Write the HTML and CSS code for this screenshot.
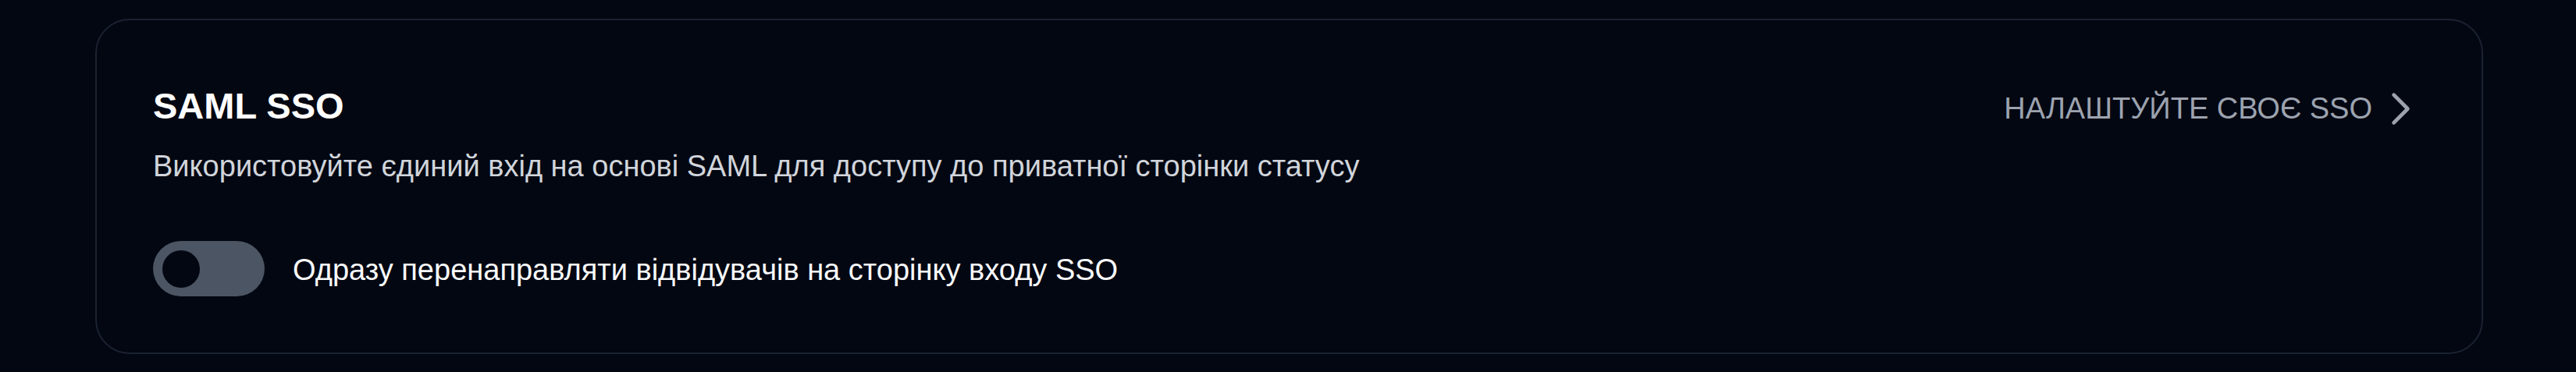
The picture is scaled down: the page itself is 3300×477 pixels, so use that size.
FILE: index.html
```html
<!DOCTYPE html>
<html lang="uk">
<head>
<meta charset="utf-8">
<title>SAML SSO</title>
<link rel="stylesheet" href="styles.css">
</head>
<body>
<main class="page">
  <section class="card">
    <div class="head">
      <div class="head-text">
        <h2 class="title">SAML SSO</h2>
        <p class="desc">Використовуйте єдиний вхід на основі SAML для доступу до приватної сторінки статусу</p>
      </div>
      <a class="link" href="#">
        <span class="link-text">НАЛАШТУЙТЕ СВОЄ SSO</span>
        <svg class="chevron" viewBox="0 0 24 24" fill="none" stroke="currentColor" stroke-width="2" stroke-linecap="round" stroke-linejoin="round" aria-hidden="true">
          <path d="m8.25 4.5 7.5 7.5-7.5 7.5"/>
        </svg>
      </a>
    </div>
    <label class="toggle-row">
      <span class="switch"><span class="knob"></span></span>
      <span class="toggle-label">Одразу перенаправляти відвідувачів на сторінку входу SSO</span>
    </label>
  </section>
</main>
</body>
</html>
```

FILE: styles.css
```css
html, body {
  margin: 0;
  padding: 0;
  background: #030712;
}

body {
  font-family: "Liberation Sans", Arial, Helvetica, sans-serif;
  color: #ffffff;
}

.page {
  padding: 24px 119px 0 122px;
}

.card {
  border: 2px solid #1b2231;
  border-radius: 44px;
  background: #030712;
  padding: 80px 75px 72px 72px;
  display: flex;
  flex-direction: column;
}

.head {
  display: flex;
  justify-content: space-between;
  align-items: flex-start;
}

.head-text {
  display: flex;
  flex-direction: column;
  gap: 23px;
}

.title {
  margin: 0;
  font-size: 47px;
  line-height: 60px;
  font-weight: 700;
  color: #ffffff;
}

.desc {
  margin: 0;
  font-size: 38px;
  line-height: 48px;
  color: #d1d5db;
}

.link {
  display: flex;
  align-items: center;
  gap: 8px;
  margin-top: 5px;
  color: #9ca3af;
  text-decoration: none;
  font-size: 38px;
  line-height: 57px;
}

.chevron {
  width: 57px;
  height: 57px;
  display: block;
}

.toggle-row {
  display: flex;
  align-items: center;
  gap: 36px;
  margin-top: 72px;
}

.switch {
  width: 143px;
  height: 71px;
  border-radius: 36px;
  background: #4b5563;
  display: flex;
  align-items: center;
  padding-left: 12px;
  box-sizing: border-box;
  flex-shrink: 0;
}

.knob {
  width: 48px;
  height: 48px;
  border-radius: 50%;
  background: #030712;
}

.toggle-label {
  font-size: 38px;
  line-height: 48px;
  color: #f9fafb;
  padding-top: 2px;
}
```
